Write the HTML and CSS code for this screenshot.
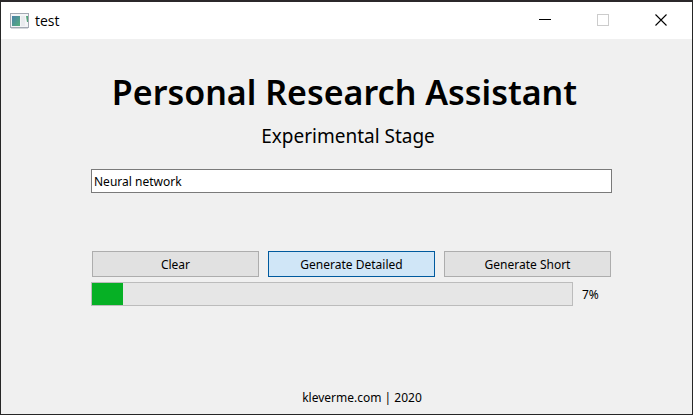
FILE: index.html
```html
<!DOCTYPE html>
<html lang="en">
<head>
<meta charset="utf-8">
<title>test</title>
<link rel="stylesheet" href="styles.css">
</head>
<body>
<div class="window">
  <header class="titlebar">
    <svg class="app-icon" width="20" height="16" viewBox="0 0 20 16" aria-hidden="true">
      <defs>
        <linearGradient id="pane" x1="0" y1="0" x2="1" y2="1">
          <stop offset="0" stop-color="#4a80a8"/>
          <stop offset="1" stop-color="#55b07c"/>
        </linearGradient>
      </defs>
      <rect x="1.5" y="0.5" width="18" height="14" fill="#f4f5f7" stroke="#a3a9b3"/>
      <path d="M2 15.5h17" stroke="#d5d8dc"/>
      <rect x="3" y="3" width="8" height="10" fill="url(#pane)"/>
      <rect x="12" y="3" width="4" height="10" fill="#e9ebee"/>
      <path d="M17 3h2v6h-1z" fill="#55a57c"/>
    </svg>
    <span class="caption">test</span>
    <div class="window-controls">
      <button type="button" class="control" aria-label="Minimize">
        <svg width="12" height="12" viewBox="0 0 12 12"><path d="M0 5.5h12" stroke="#000"/></svg>
      </button>
      <button type="button" class="control" aria-label="Maximize" disabled>
        <svg width="12" height="12" viewBox="0 0 12 12"><rect x="0.5" y="0.5" width="11" height="11" fill="none" stroke="#ccc"/></svg>
      </button>
      <button type="button" class="control" aria-label="Close">
        <svg width="12" height="12" viewBox="0 0 12 12"><path d="M0.5 0.5l11 11M11.5 0.5l-11 11" stroke="#000" stroke-width="1.1"/></svg>
      </button>
    </div>
  </header>
  <main class="client">
    <h1 class="heading">Personal Research Assistant</h1>
    <p class="subheading">Experimental Stage</p>
    <form class="form">
      <input class="query" type="text" value="Neural network" aria-label="Research topic">
      <div class="actions">
        <button type="button" class="button">Clear</button>
        <button type="button" class="button button-active">Generate Detailed</button>
        <button type="button" class="button">Generate Short</button>
      </div>
      <div class="status">
        <progress class="bar" id="progress" max="100" value="6.5"></progress>
        <label class="percent" for="progress">7%</label>
      </div>
    </form>
    <footer class="footer">kleverme.com | 2020</footer>
  </main>
</div>
</body>
</html>
```
FILE: styles.css
```css
* {
  box-sizing: border-box;
}

body {
  margin: 0;
  font-family: "Noto Sans", "Open Sans", sans-serif;
  font-size: 12px;
  line-height: 16px;
  color: #000;
}

.window {
  display: flex;
  flex-direction: column;
  min-height: 100vh;
  border: 1px solid #262626;
  border-top: 2px solid #2b282a;
  background: #f0f0f0;
}

.titlebar {
  display: flex;
  align-items: center;
  height: 37px;
  padding: 0 2px 0 8px;
  background: #fff;
}

.app-icon {
  margin-right: 6px;
}

.caption {
  font-family: "Open Sans", "Noto Sans", sans-serif;
  font-size: 14px;
}

.window-controls {
  display: flex;
  align-self: stretch;
  margin-left: auto;
}

.control {
  display: flex;
  align-items: center;
  justify-content: center;
  width: 58px;
  padding: 0 0 2px;
  border: 0;
  background: none;
}

.client {
  display: flex;
  flex: 1;
  flex-direction: column;
}

.heading {
  margin: 28px 0 0;
  padding-right: 4px;
  font-size: 34px;
  font-weight: 600;
  line-height: 50px;
  text-align: center;
}

.subheading {
  margin: 5px 0 0;
  padding-left: 3px;
  font-size: 19px;
  line-height: 28px;
  text-align: center;
}

.form {
  margin: 19px 80px 0 90px;
}

.query {
  display: block;
  width: 100%;
  height: 24px;
  padding: 0 2px;
  border: 1px solid #7a7a7a;
  background: #fff;
  color: #000;
  font: inherit;
}

.actions {
  display: grid;
  grid-template-columns: repeat(3, 1fr);
  gap: 9px;
  margin: 58px 1px 0;
}

.button {
  height: 26px;
  padding: 2px 0 0;
  border: 1px solid #adadad;
  background: #e1e1e1;
  color: #000;
  font: inherit;
}

.button-active {
  border-color: #005a9e;
  background: #d0e6f7;
}

.status {
  display: flex;
  align-items: center;
  gap: 9px;
  margin-top: 5px;
}

.bar {
  flex: 1;
  height: 24px;
  border: 1px solid #bcbcbc;
  background: #e6e6e6;
  appearance: none;
}

.bar::-webkit-progress-bar {
  background: #e6e6e6;
}

.bar::-webkit-progress-value {
  background: #06b025;
}

.percent {
  width: 30px;
  padding-top: 2px;
}

.footer {
  margin-top: auto;
  padding: 0 0 8px 31px;
  text-align: center;
}
```
